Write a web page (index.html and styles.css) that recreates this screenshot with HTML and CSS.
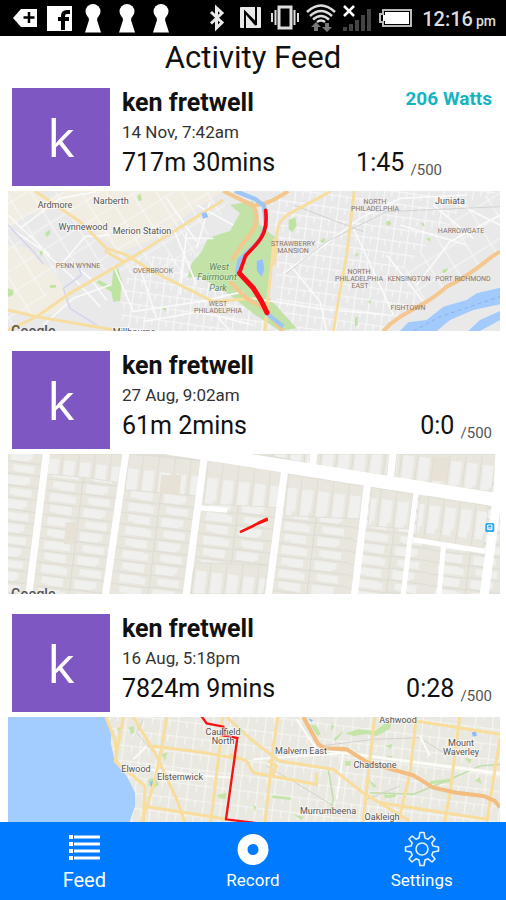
FILE: index.html
```html
<!DOCTYPE html>
<html lang="en">
<head>
  <meta charset="UTF-8">
  <meta name="viewport" content="width=device-width, initial-scale=1">
  <title>Activity Feed</title>
  <link rel="stylesheet" href="styles.css">
</head>
<body>

  <div class="status-bar">
    <div class="status-icons">
      <svg width="34" height="36" viewBox="0 0 34 36"><path d="M5 18L13 9h16v18H13z" fill="#fff"/><path d="M21 12v11M15.500 17.500h11" stroke="#000" stroke-width="2.500"/></svg>
      <svg width="34" height="36" viewBox="0 0 34 36"><rect x="5" y="6" width="25" height="25" fill="#fff"/><path d="M21 30V16q0-4 4-4h3M16 19h11" fill="none" stroke="#000" stroke-width="4"/></svg>
      <svg width="34" height="36" viewBox="0 0 34 36"><circle cx="17" cy="11.500" r="7.500" fill="#fff"/><path d="M12 15h10l-1 5 4 12.500H9L13 20z" fill="#fff"/></svg>
      <svg width="34" height="36" viewBox="0 0 34 36"><circle cx="17" cy="11.500" r="7.500" fill="#fff"/><path d="M12 15h10l-1 5 4 12.500H9L13 20z" fill="#fff"/></svg>
      <svg width="34" height="36" viewBox="0 0 34 36"><circle cx="17" cy="11.500" r="7.500" fill="#fff"/><path d="M12 15h10l-1 5 4 12.500H9L13 20z" fill="#fff"/></svg>
    </div>
    <div class="status-icons">
      <svg width="34" height="36" viewBox="0 0 34 36"><path d="M11 12l11 10.500-5.500 5.500V8l5.500 5-11 10.500" fill="none" stroke="#e8e8e8" stroke-width="3"/></svg>
      <svg width="34" height="36" viewBox="0 0 34 36"><rect x="6" y="7" width="21" height="21" rx="1" fill="#e8e8e8"/><path d="M11 28V12l11 11V7M11 12l11 13" fill="none" stroke="#000" stroke-width="2"/></svg>
      <svg width="34" height="36" viewBox="0 0 34 36" fill="none" stroke="#ddd" stroke-width="2"><rect x="11" y="7" width="12" height="21" stroke-width="3"/><path d="M7.500 10v15M4 13v9M26.500 10v15M30 13v9"/></svg>
      <svg width="38" height="36" viewBox="0 0 38 36"><path d="M5 12q14-13 28 0M8 16q11-10 22 0M11 19.500q8-7 16 0M15 22q4-3 8 0" fill="none" stroke="#ddd" stroke-width="2.500"/><path d="M14 22l5 5h-3v4h-4v-4H9zM25 32l5-5h-3v-4h-4v4h-3z" fill="#777"/></svg>
      <svg width="34" height="36" viewBox="0 0 34 36"><path d="M3 27h4v4H3zM9 24h4v7H9zM15 20h4v11h-4zM21 15h4v16h-4zM27 9h4v22h-4z" fill="#444"/><path d="M4 6l10 10M14 6L4 16" stroke="#fff" stroke-width="2.500"/></svg>
      <svg width="42" height="36" viewBox="0 0 42 36"><path d="M9 10h28v16H9v-4H6v-8h3z" fill="none" stroke="#bbb" stroke-width="2"/><path d="M11 12h24v12H11v-3h-2v-6h2z" fill="#fff"/></svg>
      <span class="clock"><span>12:16</span><small>pm</small></span>
    </div>
  </div>

  <h1>Activity Feed</h1>

  <main class="feed">

    <article class="card">
      <div class="summary">
        <div class="avatar">k</div>
        <div class="info">
          <div class="row">
            <h2>ken fretwell</h2>
            <span class="watts">206 Watts</span>
          </div>
          <div class="date">14 Nov, 7:42am</div>
          <div class="row stats has-power">
            <span>717m 30mins</span>
            <span>1:45 <small>/500</small></span>
          </div>
        </div>
      </div>
      <svg class="map" viewBox="0 0 492 140">
        <defs>
          <pattern id="streets" width="44" height="37" patternUnits="userSpaceOnUse" patternTransform="rotate(8)">
            <path d="M0 2H44M2 0V37M24 0V20" stroke="#fafafa" stroke-width="3" fill="none"/>
          </pattern>
          <pattern id="lanes" width="64" height="58" patternUnits="userSpaceOnUse" patternTransform="rotate(-32)">
            <path d="M0 3H64M3 0V58" stroke="#f8f8f8" stroke-width="3" fill="none"/>
          </pattern>
        </defs>
        <g transform="scale(.33333) translate(-24 -18)">
          <rect x="24" y="18" width="1476" height="420" fill="#e9e9e9"/>
          <path d="M24 180L90 190 160 260 210 330 180 380 110 395 24 370zM210 18H670L560 90 500 140 420 180 360 200 300 150 200 90 130 40zM24 18H110L180 70 80 90 24 130z" fill="#f1ede3"/>
          <path d="M24 18H700L620 160 560 280H400L190 220 110 395 24 438z" fill="url(#lanes)"/>
          <path d="M400 220L600 200 680 340 830 350V150L800 18H1500V210L1350 300 1150 438H370L360 340z" fill="url(#streets)"/>
          <path d="M1200 260L1290 170 1400 50 1500 18V200L1370 300 1260 350z" fill="#e9e9e9"/>
          <path d="M1200 260L1290 170 1400 50 1500 18V200L1370 300 1260 350z" fill="url(#lanes)"/>
          <!-- parks -->
          <path d="M690 60L759 48 780 120 830 160 815 250 800 330 890 430 840 438 759 385 690 330 600 275 562 278 575 235 605 200 625 158 690 138 720 85z" fill="#c2e2a8"/>
          <path d="M340 255l14-5 12 40-6 58-20 2-6-30-45-27 8-8 38 20zM866 105l20-8 4 25-14 20-10-10zM135 145l15-12v15l-10 8zM118 205l10-20 6 6-10 22zM150 300h18v8h-18zM24 310l16 6v14l-16 6zM412 34l10-8 3 20-10 2zM485 368h14l-2 12zM962 165l12-6 2 10-12 6zM1158 112l10-6 6 12-12 4zM1260 115h12l2 12zM1279 162l12-6v14zM1328 255l16-6-4 12-12 4zM1105 350l8-8-2 16zM1065 400l8-6v25l-8 5zM1065 208l12-4-6 12z" fill="#bfe3a0"/>
          <!-- small streets -->
          <g fill="none" stroke="#fafafa" stroke-width="5">
            <path d="M24 125L120 190 210 270 240 300 300 365M60 130L180 40 290 20M185 238L255 155 330 150M24 90L150 210M210 230L270 280 320 345M340 240L400 380 600 350 730 320M420 250L470 400M520 130L590 300M560 140L540 330M430 410L600 380 759 420M130 420L220 340 330 300M500 40L590 170M590 60L700 120M630 50L590 190M560 160H640M640 380L690 438"/>
            <path d="M850 265L960 190 1080 100 1200 40 1400 30M870 240L960 350 980 438M759 340L950 370 1160 390M1060 130L1130 280 1180 390M1200 120L1400 180M1160 210L1270 350M1250 300L1350 170 1500 90M1300 60L1420 160M1360 50L1500 120"/>
          </g>
          <path d="M24 120L100 200 130 238M230 235L245 270 190 310 210 370 290 420" fill="none" stroke="#d5d6ee" stroke-width="5"/>
          <path d="M860 265L980 170 1160 80 1500 65M880 60L1090 140" fill="none" stroke="#d2d2d2" stroke-width="3"/>
          <!-- main roads -->
          <g fill="none" stroke="#f7dea0" stroke-width="9">
            <path d="M105 18L240 110 320 190 380 210 450 255 640 350 759 340M24 375L110 395 360 438M24 436L110 395 210 325 400 215 480 165 670 45M315 198L370 230"/>
            <path d="M1063 18L1040 210 1020 320 1000 438M823 240C835 150 815 110 880 80L990 20M823 160L805 330 795 438"/>
          </g>
          <g fill="none" stroke="#f3c78e" stroke-width="12">
            <path d="M670 18L759 62C800 60 830 40 865 18M759 62C790 110 750 150 725 180L695 225M690 290L740 340 790 370 850 438"/>
            <path d="M1150 438C1200 380 1280 365 1340 305 1420 270 1460 220 1500 200"/>
          </g>
          <!-- rivers -->
          <path d="M705 18L765 42 792 62 798 120 780 165 745 200 718 225 712 265M800 385L850 425" fill="none" stroke="#9dc6f5" stroke-width="13"/>
          <path d="M770 228l18-5 5 30-8 22-14-18zM605 85l14-3 6 14-16 6z" fill="#93c1fa"/>
          <path d="M1200 438L1225 412 1280 405 1330 365 1400 345 1430 325 1500 308V358L1420 375 1350 405 1310 438zM1405 438L1440 405 1500 378V405L1440 438z" fill="#a3cafd"/>
          <path d="M1240 438L1320 395 1440 355 1500 335" fill="none" stroke="#7ba6d8" stroke-width="2" stroke-dasharray="12 9"/>
          <path d="M797 76C803 130 790 155 765 182L737 212 718 265" fill="none" stroke="#fa0a14" stroke-width="11" stroke-linejoin="round" stroke-linecap="round"/>
          <path d="M718 265L759 308 785 350 801 383" fill="none" stroke="#fa0a14" stroke-width="15" stroke-linejoin="round" stroke-linecap="round"/>
        </g>
        <g class="place">
          <text x="47" y="17">Ardmore</text>
          <text x="103" y="13">Narberth</text>
          <text x="75" y="39">Wynnewood</text>
          <text x="134" y="43">Merion Station</text>
          <text x="442" y="13">Juniata</text>
          <text x="126" y="144">Millbourne</text>
        </g>
        <g class="place park">
          <text x="211" y="79">West</text>
          <text x="209" y="89">Fairmount</text>
          <text x="210" y="100">Park</text>
        </g>
        <g class="district">
          <text x="70" y="77">PENN WYNNE</text>
          <text x="145" y="82">OVERBROOK</text>
          <text x="210" y="115">WEST</text>
          <text x="210" y="122">PHILADELPHIA</text>
          <text x="367" y="13">NORTH</text>
          <text x="367" y="20">PHILADELPHIA</text>
          <text x="453" y="42">HARROWGATE</text>
          <text x="285" y="55">STRAWBERRY</text>
          <text x="285" y="62">MANSION</text>
          <text x="351" y="83">NORTH</text>
          <text x="351" y="90">PHILADELPHIA</text>
          <text x="352" y="97">EAST</text>
          <text x="401" y="90">KENSINGTON</text>
          <text x="455" y="90">PORT RICHMOND</text>
          <text x="400" y="119">FISHTOWN</text>
        </g>
        <text class="google" x="3" y="145">Google</text>
      </svg>
    </article>

    <article class="card">
      <div class="summary">
        <div class="avatar">k</div>
        <div class="info">
          <div class="row">
            <h2>ken fretwell</h2>
          </div>
          <div class="date">27 Aug, 9:02am</div>
          <div class="row stats">
            <span>61m 2mins</span>
            <span>0:0 <small>/500</small></span>
          </div>
        </div>
      </div>
      <svg class="map" viewBox="0 0 492 140">
        <defs>
          <pattern id="lots" width="236" height="72" patternUnits="userSpaceOnUse" patternTransform="translate(140 325) rotate(7)">
            <path d="M30 6H96V30H50V26H30zM26 42H90V46H104V66H26zM130 4H196V24H186V30H130zM140 42H206V64H150V60H140z" fill="#f0f0ee"/>
            <path d="M0 1H118M0 36H118M118 0V72M118 34H236M118 70H236" stroke="#dcdad2" stroke-width="3" fill="none"/>
          </pattern>
          <pattern id="plots" width="48" height="140" patternUnits="userSpaceOnUse" patternTransform="translate(140 325) rotate(7)">
            <path d="M8 12H40V80H32V96H8z" fill="#f0f0ee"/>
            <path d="M1 0V140" stroke="#dcdad2" stroke-width="3"/>
          </pattern>
        </defs>
        <g transform="scale(.33333) translate(-24 -325)">
          <rect x="24" y="325" width="1476" height="420" fill="#e8e6dd"/>
          <rect x="24" y="325" width="1476" height="420" fill="url(#lots)"/>
          <!-- end blocks, plots run the other way -->
          <path d="M150 325H368L355 410 250 395 140 385zM388 325L605 345 592 450 375 432zM625 345L846 380 834 485 612 475zM866 385L1093 422 1084 520 855 510zM1115 425L1240 445 1228 550 1104 540zM1260 450L1465 480 1450 610 1246 575zM790 325H932L928 355zM952 325H1168L1160 390 950 360zM1190 325H1490L1475 438 1184 398zM590 650L560 745H790L806 660z" fill="#e8e6dd"/>
          <path d="M150 325H368L355 410 250 395 140 385zM388 325L605 345 592 450 375 432zM625 345L846 380 834 485 612 475zM866 385L1093 422 1084 520 855 510zM1115 425L1240 445 1228 550 1104 540zM1260 450L1465 480 1450 610 1246 575zM790 325H932L928 355zM952 325H1168L1160 390 950 360zM1190 325H1490L1475 438 1184 398zM590 650L560 745H790L806 660z" fill="url(#plots)" stroke="#dddbd2" stroke-width="2"/>
          <path d="M197 530h30l-3 65h-32zM1302 335h46l-8 75-46-6zM484 388h60l-6 60-60-5z" fill="#e7e1d6"/>
          <!-- streets -->
          <g fill="none" stroke="#fff">
            <path d="M140 320L86 750M378 320L316 750M615 320L558 750M856 360L805 750M1104 400L1063 750M942 320L937 370M1179 320L1170 410" stroke-width="21"/>
            <path d="M1249 430L1209 750M1240 582L1455 617M1331 595L1317 750M595 486L682 494" stroke-width="15"/>
            <path d="M370 286L759 346 1500 464" stroke-width="40"/>
            <path d="M1500 320L1494 440 1452 750" stroke-width="27"/>
          </g>
          <rect x="1456" y="532" width="27" height="27" rx="5" fill="#2da5f4"/>
          <path d="M1463 538h13v14h-13zM1463 547h13" fill="none" stroke="#fff" stroke-width="3"/>
          <path d="M723 558L759 541 778 530 800 520M770 535l30-12" fill="none" stroke="#fb1010" stroke-width="8" stroke-linecap="round"/>
        </g>
        <text class="google" x="3" y="145">Google</text>
      </svg>
    </article>

    <article class="card">
      <div class="summary">
        <div class="avatar">k</div>
        <div class="info">
          <div class="row">
            <h2>ken fretwell</h2>
          </div>
          <div class="date">16 Aug, 5:18pm</div>
          <div class="row stats">
            <span>7824m 9mins</span>
            <span>0:28 <small>/500</small></span>
          </div>
        </div>
      </div>
      <svg class="map" viewBox="0 0 492 140">
        <defs>
          <pattern id="suburb" width="52" height="46" patternUnits="userSpaceOnUse" patternTransform="rotate(7)">
            <path d="M0 2H52M2 0V46M28 0V22" stroke="#f8f8f5" stroke-width="3" fill="none"/>
          </pattern>
        </defs>
        <g transform="scale(.33333) translate(-24 -333)">
          <rect x="24" y="333" width="1476" height="420" fill="#e9e8e1"/>
          <rect x="24" y="333" width="1476" height="420" fill="url(#suburb)"/>
          <path d="M24 333H318L335 370 332 410 345 470 380 510 405 560V600L388 650 400 753H24z" fill="#a3ccff"/>
          <path d="M385 365l15-6 4 20-10 6zM350 368l10-5v18zM485 445l18-6-8 25zM445 520l24-5 8 22-20 10-12-10zM650 568l30-8-4 20-16-4zM1036 382l40-12 50 4 30-22 20-14-6 30-40 22-30-6-40 6zM995 352l8 10-10 12zM1000 400l36-30-30 36zM930 355l20 5 12 25-10 5zM1155 420l22-6-4 14zM1160 450h16v12h-16zM1036 465h16v14h-16zM817 568l55 6v8l-55-6zM1290 525l60-6v10l-60 6zM1395 455l20 5-5 14zM1105 520l25 20-8 6zM1150 565l20 2 20-4-4 10-30 4zM1425 525l14-12 6 20zM880 625l32 8-8 8zM759 598l10 4-4 14z" fill="#c4e4a8"/>
          <path d="M450 528l12-4 4 14-12 4zM1415 380l12-5 4 14-12 3zM1270 358l16 4M925 335l14 8-6 6zM759 505l8 20z" fill="#8cbcf8"/>
          <!-- creek and rail -->
          <path d="M985 490L1000 580 990 620M1110 560L1240 565 1350 520 1440 480 1500 475" fill="none" stroke="#c4dfae" stroke-width="5"/>
          <path d="M960 420L1120 400 1260 395 1330 440M430 340L410 380 470 450M800 480L920 550 1000 600M1100 580L1200 540" fill="none" stroke="#d3d2cd" stroke-width="3"/>
          <path d="M890 340L950 430 1500 505M759 460L1050 440 1110 450 1500 500M400 485L620 510 700 515M1050 430L1100 465M1260 390L1290 450M400 460L440 420M1010 580L1030 440" fill="none" stroke="#fbfbf8" stroke-width="6"/>
          <!-- main roads -->
          <g fill="none" stroke="#f8dd9c" stroke-width="9">
            <path d="M318 333L348 410 350 470 400 510 435 540M370 333L345 470M400 333L470 450 530 580 555 650M500 333L485 430 460 540 425 650M668 333L660 420 632 650M455 420L600 438 720 460M430 600L680 640M435 540L430 650M680 333L759 405 839 465 1000 490 1089 560 1230 645M345 400L350 450M690 445L740 465 759 500 949 535V500"/>
            <path d="M834 333L820 420 805 560 795 650M1124 333L1110 460 1089 650M1249 333L1230 500 1195 650M1379 333L1350 560 1334 650M1500 395L1460 650M1249 345L1500 385M1140 590L1459 640M805 465L830 480 815 510"/>
          </g>
          <path d="M910 333L955 415 975 427 1040 430 1104 470 1240 508 1300 545 1370 560 1450 570 1485 585 1500 605" fill="none" stroke="#f2bd7f" stroke-width="12"/>
          <path d="M604 330L620 352 670 362 668 388 712 396 678 640 759 650 820 660" fill="none" stroke="#f01416" stroke-width="7"/>
        </g>
        <g class="place">
          <text x="215" y="18">Caulfield</text>
          <text x="215" y="27">North</text>
          <text x="128" y="55">Elwood</text>
          <text x="172" y="63">Elsternwick</text>
          <text x="293" y="37">Malvern East</text>
          <text x="390" y="6">Ashwood</text>
          <text x="453" y="29">Mount</text>
          <text x="453" y="38">Waverley</text>
          <text x="367" y="51">Chadstone</text>
          <text x="320" y="97">Murrumbeena</text>
          <text x="374" y="103">Oakleigh</text>
        </g>
      </svg>
    </article>

  </main>

  <nav class="tab-bar">
    <a href="#feed" class="tab active">
      <svg width="36" height="36" viewBox="0 0 36 36"><path d="M3 4h4v4H3zM3 11h4v4H3zM3 18h4v4H3zM3 25h4v4H3zM8 4.500h26v3H8zM8 11.500h26v3H8zM8 18.500h26v3H8zM8 25.500h26v3H8z" fill="#fff"/></svg>
      <span>Feed</span>
    </a>
    <a href="#record" class="tab">
      <svg width="36" height="36" viewBox="0 0 36 36"><circle cx="18" cy="18.500" r="10.500" fill="none" stroke="#fff" stroke-width="10"/></svg>
      <span>Record</span>
    </a>
    <a href="#settings" class="tab">
      <svg width="36" height="36" viewBox="0 0 36 36" fill="none" stroke="#e4efff" stroke-width="1.600" stroke-linejoin="round"><path d="M15 7L16 1.500h4L21 7 24 8.200 28 5 31 8 27.800 12 29 15 34.500 16v4L29 21 27.800 24 31 28 28 31 24 27.800 21 29 20 34.500h-4L15 29 12 27.800 8 31 5 28 8.200 24 7 21 1.500 20v-4L7 15 8.200 12 5 8 8 5 12 8.200z"/><circle cx="18" cy="18" r="6"/></svg>
      <span>Settings</span>
    </a>
  </nav>

</body>
</html>
```
FILE: styles.css
```css
* {
  box-sizing: border-box;
}
body {
  margin: 0;
  height: 100vh;
  display: flex;
  flex-direction: column;
  overflow: hidden;
  font-family: Roboto, "Liberation Sans", sans-serif;
  color: #111;
  background-color: #fff;
}
svg {
  display: block;
}

/* status bar */
.status-bar {
  display: flex;
  justify-content: space-between;
  flex-shrink: 0;
  height: 36px;
  padding: 0 10px 0 8px;
  background-color: #000;
}
.status-icons {
  display: flex;
}
.clock {
  display: flex;
  align-items: baseline;
  gap: 3px;
  margin-left: 6px;
  font-size: 20px;
  font-weight: 500;
  line-height: 38px;
  color: #ddd;
}
.clock small {
  font-size: 14px;
}

h1 {
  margin: 0;
  padding-bottom: 8px;
  flex-shrink: 0;
  font-size: 31px;
  font-weight: 400;
  line-height: 44px;
  text-align: center;
}

/* feed */
.feed {
  flex: 1;
  min-height: 0;
  overflow-y: auto;
  scrollbar-width: none;
  padding: 0 6px 0 8px;
}
.card {
  margin-bottom: 20px;
}
.summary {
  display: flex;
  gap: 12px;
  padding: 0 8px 5px 4px;
}
.avatar {
  flex-shrink: 0;
  width: 98px;
  height: 98px;
  background-color: #7e57c2;
  color: #fff;
  font-family: "Open Sans", Roboto, sans-serif;
  font-size: 52px;
  font-weight: 500;
  line-height: 98px;
  text-align: center;
}
.info {
  flex: 1;
}
.row {
  display: flex;
  justify-content: space-between;
}
h2 {
  margin: 0;
  font-size: 25px;
  font-weight: 700;
  line-height: 30px;
}
.watts {
  font-size: 19px;
  font-weight: 700;
  line-height: 22px;
  color: #14b5c0;
}
.date {
  font-size: 17px;
  line-height: 28px;
  color: #333;
}
.stats {
  font-size: 25px;
  line-height: 34px;
}
.stats small {
  position: relative;
  top: 4px;
  font-size: 15px;
  color: #555;
}
.has-power {
  padding-right: 50px;
}

/* maps */
.map {
  width: 100%;
}
.map text {
  text-anchor: middle;
}
.place {
  font-size: 9px;
  fill: #555;
  stroke: #fff;
  stroke-width: 2px;
  stroke-opacity: 0.5;
  paint-order: stroke;
}
.park {
  fill: #5f8a5a;
  font-style: italic;
  stroke-opacity: 0.2;
}
.district {
  font-size: 7px;
  fill: #8c7466;
}
.map .google {
  font-size: 14px;
  font-weight: 500;
  fill: #555;
  text-anchor: start;
}

/* bottom tabs */
.tab-bar {
  display: flex;
  flex-shrink: 0;
  height: 78px;
  background-color: #007aff;
}
.tab {
  flex: 1;
  display: flex;
  flex-direction: column;
  align-items: center;
  padding-top: 9px;
  font-size: 17px;
  line-height: 26px;
  color: #fff;
  text-decoration: none;
}
.active {
  font-size: 20px;
}
```
